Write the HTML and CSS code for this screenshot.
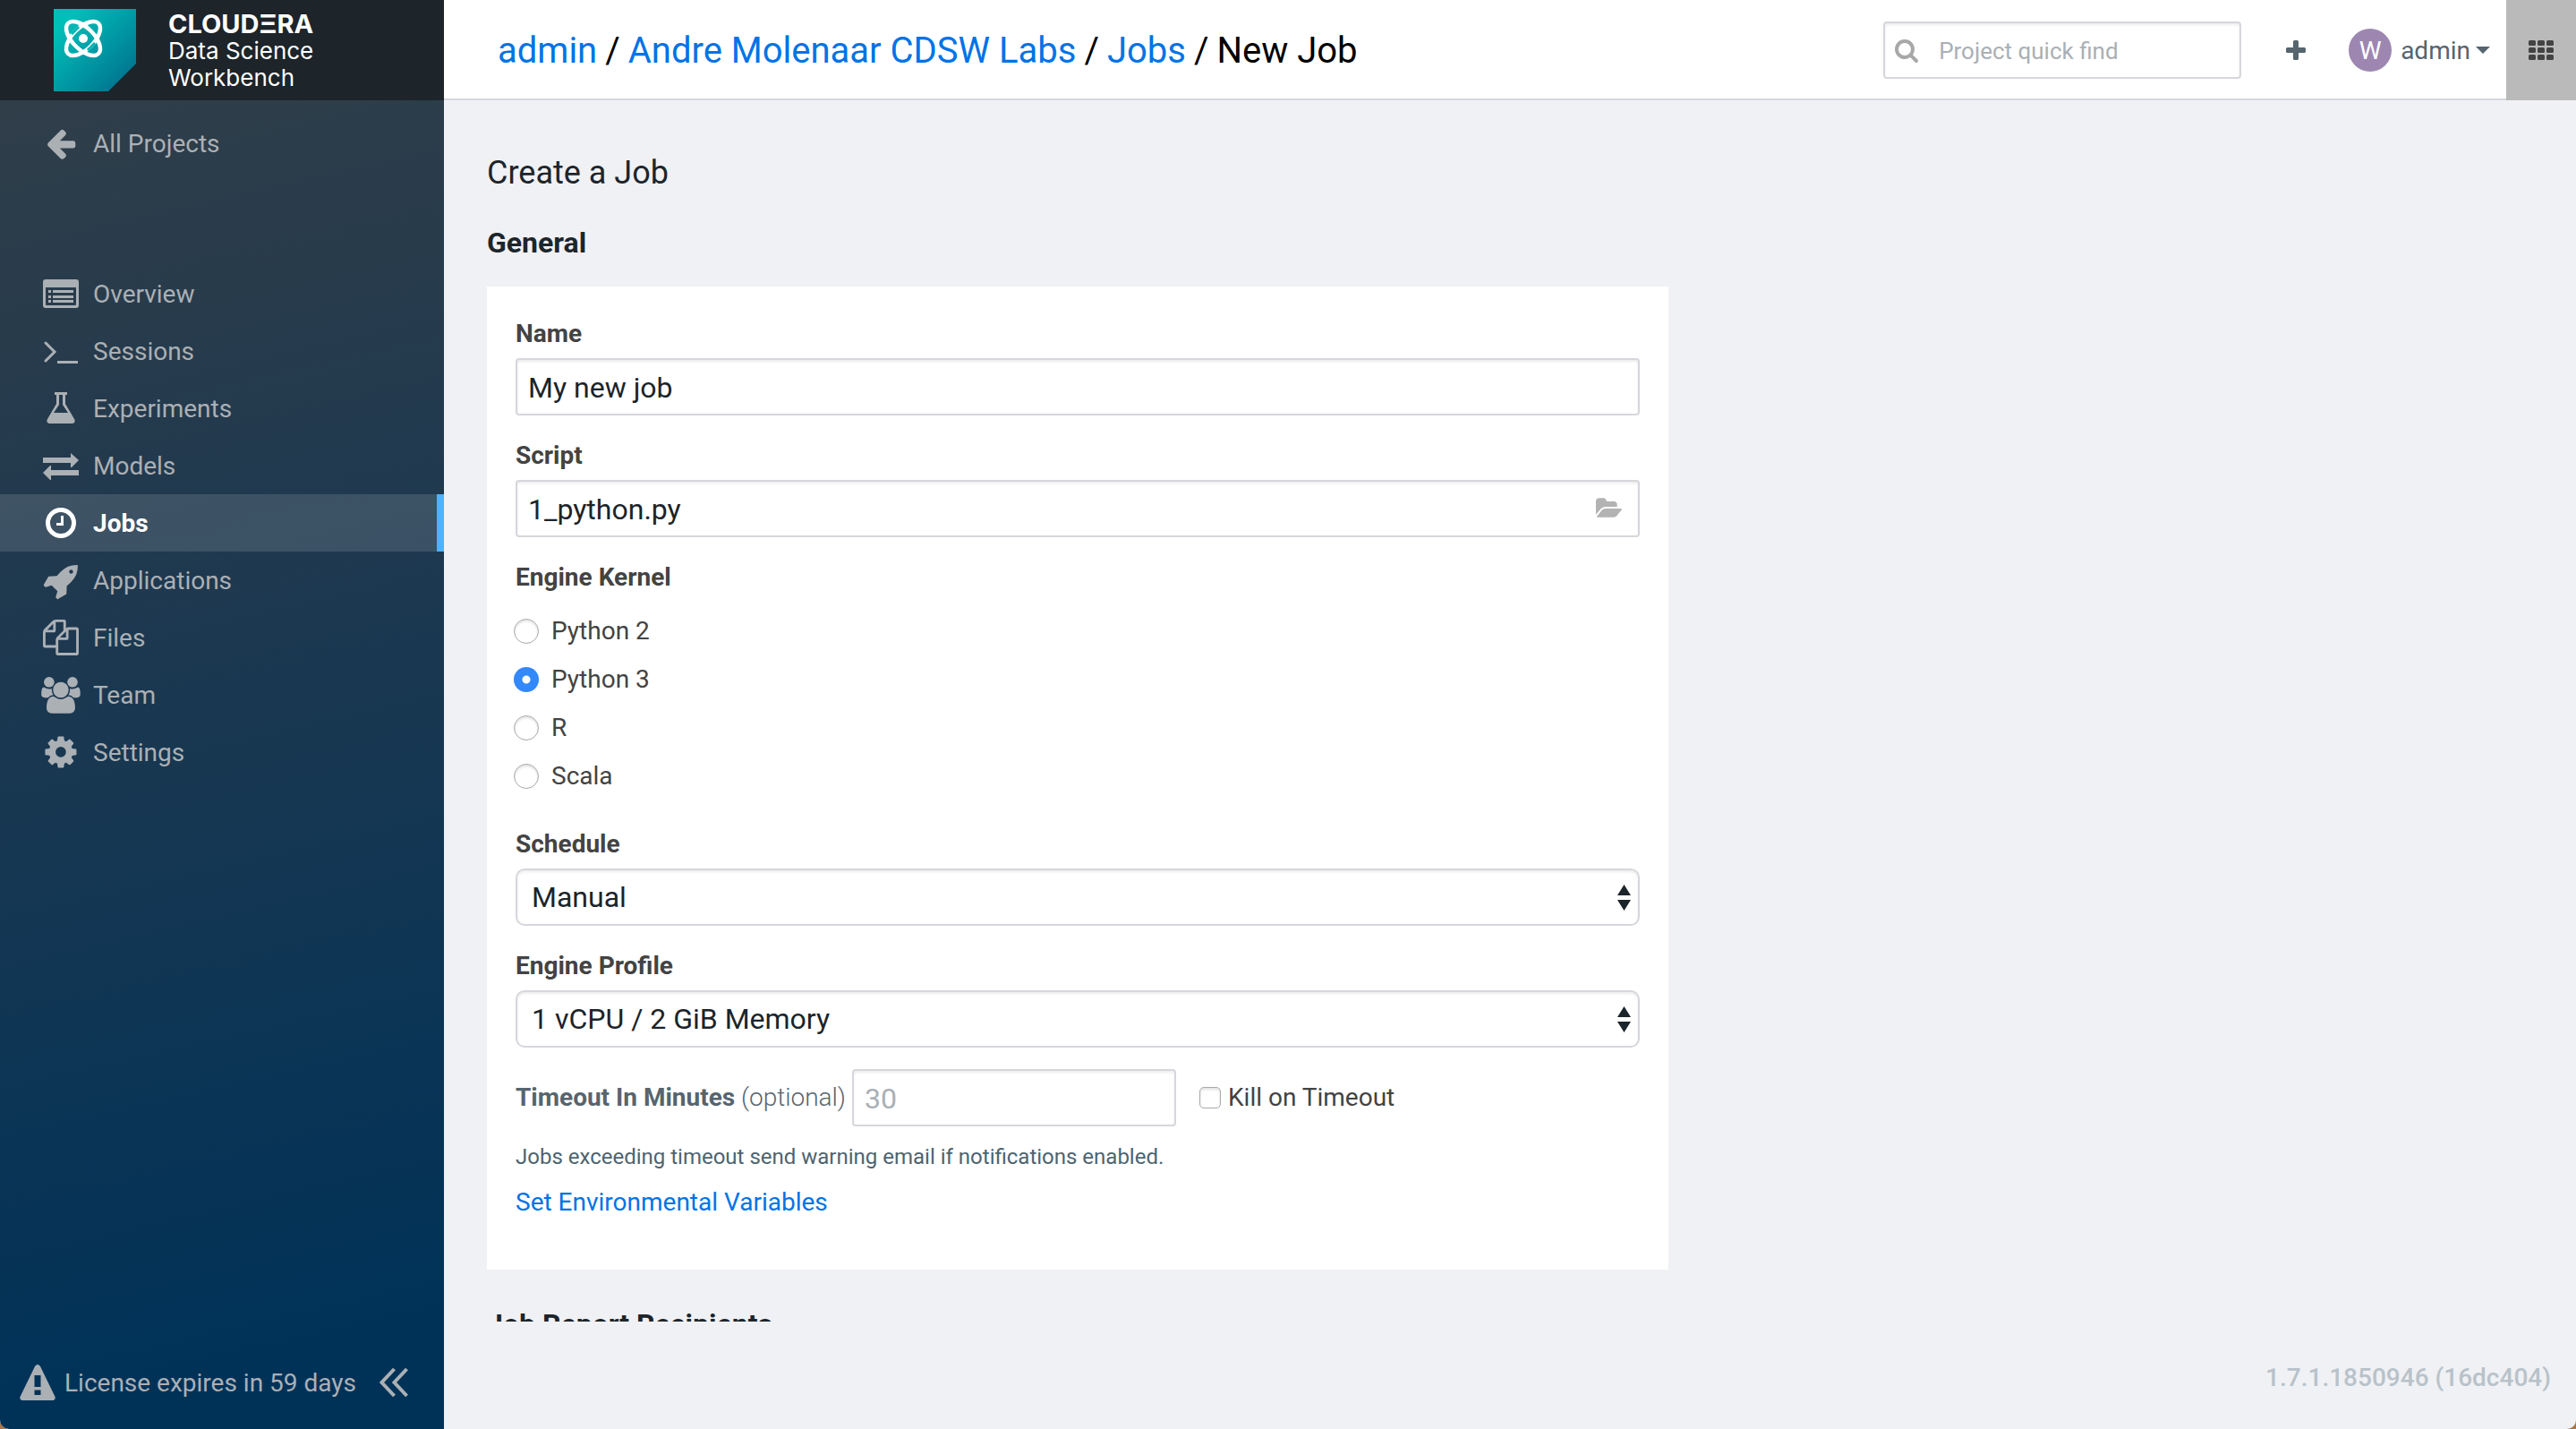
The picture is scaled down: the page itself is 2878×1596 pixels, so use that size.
FILE: index.html
```html
<!DOCTYPE html>
<html lang="en">
<head>
<meta charset="utf-8">
<meta name="viewport" content="width=device-width, initial-scale=1">
<title>New Job - Cloudera Data Science Workbench</title>
<link rel="stylesheet" href="styles.css">
</head>
<body>
<div class="app">
  <aside class="sidebar">
    <a class="brand" href="#">
      <svg class="brand-mark" viewBox="0 0 92 92" aria-hidden="true">
        <defs>
          <linearGradient id="brand-fill" x1="0" y1="0" x2="1" y2="1">
            <stop offset="0.15" stop-color="#00bfb8"/>
            <stop offset="0.85" stop-color="#007892"/>
          </linearGradient>
        </defs>
        <path d="M0 0H92V61L61 92H0z" fill="url(#brand-fill)"/>
        <g fill="none" transform="translate(33 33)">
          <ellipse rx="24" ry="12" transform="rotate(-45)" stroke="#fff" stroke-width="4.500"/>
          <path d="M-13 -5L-5 -13M5 13L13 5" stroke="#04b2b3" stroke-width="3"/>
          <ellipse rx="24" ry="12" transform="rotate(45)" stroke="#fff" stroke-width="4.500"/>
          <circle r="5" fill="#fff"/>
        </g>
      </svg>
      <span class="brand-text"><strong>CLOUDΞRA</strong><span>Data Science</span><span>Workbench</span></span>
    </a>
    <nav class="nav">
      <a class="nav-item nav-back" href="#">
        <svg class="icon" viewBox="-4 -4 44 44" aria-hidden="true"><path transform="translate(-1 -1) scale(.0212)" d="M1664 896v128q0 53-32.500 90.500t-84.500 37.500h-704l293 294q38 36 38 90t-38 90l-75 76q-37 37-90 37-52 0-91-37l-651-652q-37-37-37-90 0-52 37-91l651-650q38-38 91-38 52 0 90 38l75 74q38 38 38 91t-38 91l-293 293h704q52 0 84.500 37.500t32.500 90.500z"/></svg>
        <span>All Projects</span>
      </a>
      <a class="nav-item" href="#">
        <svg class="icon" viewBox="0 0 44 44" aria-hidden="true"><path fill-rule="evenodd" d="M5 6H39a3 3 0 0 1 3 3V35a3 3 0 0 1-3 3H5a3 3 0 0 1-3-3V9a3 3 0 0 1 3-3zM5 15V34q0 1 1 1H38q1 0 1-1V15z"/><path d="M8 18h3v3H8zM13 18H36v3H13zM8 24h3v3H8zM13 24H36v3H13zM8 29h3v3H8zM13 29H36v3H13z"/></svg>
        <span>Overview</span>
      </a>
      <a class="nav-item" href="#">
        <svg class="icon" viewBox="0 0 44 44" aria-hidden="true"><path d="M5 13L15 23 5 33" fill="none" stroke="currentColor" stroke-width="3" stroke-linecap="round"/><path d="M18 33H41v3H18z"/></svg>
        <span>Sessions</span>
      </a>
      <a class="nav-item" href="#">
        <svg class="icon" viewBox="0 0 44 44" aria-hidden="true"><path fill-rule="evenodd" d="M15 4H29v3H27V17L37 34q2 4-2 5H9q-4-1-2-5L17 17V7H15zM20 7V18L14 27H30L24 18V7z"/></svg>
        <span>Experiments</span>
      </a>
      <a class="nav-item" href="#">
        <svg class="icon" viewBox="0 0 44 44" aria-hidden="true"><path d="M2 13H33V8L42 16 34 24H33V19H2zM42 27H11V22H10L2 30 10 38H11V33H42z"/></svg>
        <span>Models</span>
      </a>
      <a class="nav-item active" href="#" aria-current="page">
        <svg class="icon" viewBox="0 0 44 44" aria-hidden="true"><circle cx="22" cy="22" r="14.500" fill="none" stroke="currentColor" stroke-width="5"/><path d="M23.500 14V23.500H17" fill="none" stroke="currentColor" stroke-width="3"/></svg>
        <span>Jobs</span>
      </a>
      <a class="nav-item" href="#">
        <svg class="icon" viewBox="0 0 44 44" aria-hidden="true"><path transform="translate(2 2) scale(.0234)" d="M1440 448q0-40-28-68t-68-28-68 28-28 68 28 68 68 28 68-28 28-68zm224-288q0 249-75.500 430.500t-253.500 360.500q-81 80-195 176l-20 379q-2 16-16 26l-384 224q-7 4-16 4-12 0-23-9l-64-64q-13-14-8-32l85-276-281-281-276 85q-3 1-9 1-14 0-23-9l-64-64q-17-19-5-39l224-384q10-14 26-16l379-20q96-114 176-195 188-187 358-258t431-71q14 0 24 9.500t10 22.500z"/></svg>
        <span>Applications</span>
      </a>
      <a class="nav-item" href="#">
        <svg class="icon" viewBox="0 0 44 44" aria-hidden="true"><path transform="translate(2 2) scale(.0223)" d="M1696 384q40 0 68 28t28 68v1216q0 40-28 68t-68 28h-960q-40 0-68-28t-28-68v-288h-544q-40 0-68-28t-28-68v-672q0-40 20-88t48-76l408-408q28-28 76-48t88-20h416q40 0 68 28t28 68v328q68-40 128-40h416zm-544 213l-299 299h299v-299zm-640-384l-299 299h299v-299zm196 647l316-316v-416h-384v416q0 40-28 68t-68 28h-416v640h512v-256q0-40 20-88t48-76zm956 804v-1152h-384v416q0 40-28 68t-68 28h-416v640h896z"/></svg>
        <span>Files</span>
      </a>
      <a class="nav-item" href="#">
        <svg class="icon" viewBox="0 0 44 44" aria-hidden="true"><path transform="translate(-1.300 2) scale(.0227)" d="M657 896q-162 5-265 128h-134q-82 0-138-40.500t-56-118.500q0-353 124-353 6 0 43.500 21t97.500 42.500 119 21.500q67 0 133-23-5 37-5 66 0 143 83 256zm1071 637q0 120-73 189.500t-194 69.500h-874q-121 0-194-69.500t-73-189.500q0-53 3.500-103.500t14-109 26.500-108.500 43-97.500 62-81 85.500-53.500 111.500-20q10 0 43 21.500t73 48 107 48 135 21.500 135-21.500 107-48 73-48 43-21.500q61 0 111.500 20t85.500 53.500 62 81 43 97.500 26.500 108.500 14 109 3.500 103.500zm-1024-1277q0 106-75 181t-181 75-181-75-75-181 75-181 181-75 181 75 75 181zm704 384q0 159-112.500 271.500t-271.500 112.500-271.500-112.500-112.500-271.500 112.500-271.500 271.500-112.500 271.500 112.500 112.500 271.500zm576 225q0 78-56 118.500t-138 40.500h-134q-103-123-265-128 83-113 83-256 0-29-5-66 66 23 133 23 59 0 119-21.500t97.500-42.500 43.500-21q124 0 124 353zm-128-609q0 106-75 181t-181 75-181-75-75-181 75-181 181-75 181 75 75 181z"/></svg>
        <span>Team</span>
      </a>
      <a class="nav-item" href="#">
        <svg class="icon" viewBox="0 0 44 44" aria-hidden="true"><path transform="translate(1.500 1.500) scale(.0228)" d="M1152 896q0-106-75-181t-181-75-181 75-75 181 75 181 181 75 181-75 75-181zm512-109v222q0 12-8 23t-20 13l-185 28q-19 54-39 91 35 50 107 138 10 12 10 25t-9 23q-27 37-99 108t-94 71q-12 0-26-9l-138-108q-44 23-91 38-16 136-29 186-7 28-36 28h-222q-14 0-24.500-8.500t-11.500-21.500l-28-184q-49-16-90-37l-141 107q-10 9-25 9-14 0-25-11-126-114-165-168-7-10-7-23 0-12 8-23 15-21 51-66.500t54-70.500q-27-50-41-99l-183-27q-13-2-21-12.500t-8-23.500v-222q0-12 8-23t19-13l186-28q14-46 39-92-40-57-107-138-10-12-10-24 0-10 9-23 26-36 98.500-107.500t94.500-71.500q13 0 26 10l138 107q44-23 91-38 16-136 29-186 7-28 36-28h222q14 0 24.500 8.500t11.500 21.500l28 184q49 16 90 37l142-107q9-9 24-9 13 0 25 10 129 119 165 170 7 8 7 22 0 12-8 23-15 21-51 66.500t-54 70.500q26 50 41 98l183 28q13 2 21 12.500t8 23.500z"/></svg>
        <span>Settings</span>
      </a>
    </nav>
    <div class="sidebar-footer">
      <a class="license" href="#">
        <svg class="icon-warning" viewBox="0 0 40 40" aria-hidden="true"><path fill-rule="evenodd" d="M17 2q3-4 6 0L39.500 36q1 3-2 4H2.500q-3-1-2-4zM16.500 12V25H23.500V12zM16.500 28.500V34H23.500V28.500z"/></svg>
        <span>License expires in 59 days</span>
      </a>
      <button class="collapse" type="button" aria-label="Collapse sidebar">
        <svg viewBox="0 0 32 34" aria-hidden="true"><path d="M16.500 2L2.500 17l14 15M30.500 2l-14 15 14 15" fill="none" stroke="currentColor" stroke-width="4"/></svg>
      </button>
    </div>
  </aside>

  <div class="page">
    <header class="topbar">
      <nav class="breadcrumb" aria-label="Breadcrumb">
        <a href="#">admin</a><span>/</span><a href="#">Andre Molenaar CDSW Labs</a><span>/</span><a href="#">Jobs</a><span>/</span><span>New Job</span>
      </nav>
      <div class="search">
        <svg class="search-icon" viewBox="0 0 1792 1792" aria-hidden="true"><path d="M1216 832q0-185-131.500-316.500t-316.500-131.500-316.500 131.500-131.500 316.500 131.500 316.500 316.500 131.500 316.500-131.500 131.500-316.500zm512 832q0 52-38 90t-90 38q-54 0-90-38l-343-342q-179 124-399 124-143 0-273.500-55.500t-225-150-150-225-55.500-273.500 55.500-273.500 150-225 225-150 273.500-55.500 273.500 55.500 225 150 150 225 55.500 273.500q0 220-124 399l343 343q37 37 37 90z"/></svg>
        <input class="control search-input" type="text" aria-label="Project quick find" placeholder="Project quick find">
      </div>
      <button class="add" type="button" aria-label="New">
        <svg viewBox="0 0 22 22" aria-hidden="true"><path d="M9.500 0h3q1.500 0 1.500 1.500V8h6.500Q22 8 22 9.500v3q0 1.500-1.500 1.500H14v6.500q0 1.500-1.500 1.500h-3Q8 22 8 20.500V14H1.500Q0 14 0 12.500v-3Q0 8 1.500 8H8V1.500Q8 0 9.500 0z"/></svg>
      </button>
      <button class="user" type="button">
        <span class="avatar">W</span>
        <span class="user-name">admin</span>
        <svg class="caret" viewBox="0 0 16 8" aria-hidden="true"><path d="M0 0H16L8 8z"/></svg>
      </button>
      <button class="apps" type="button" aria-label="Applications">
        <svg viewBox="0 0 28 22" aria-hidden="true"><g><rect width="8" height="6" rx="1.500"/><rect x="10" width="8" height="6" rx="1.500"/><rect x="20" width="8" height="6" rx="1.500"/><rect y="8" width="8" height="6" rx="1.500"/><rect x="10" y="8" width="8" height="6" rx="1.500"/><rect x="20" y="8" width="8" height="6" rx="1.500"/><rect y="16" width="8" height="6" rx="1.500"/><rect x="10" y="16" width="8" height="6" rx="1.500"/><rect x="20" y="16" width="8" height="6" rx="1.500"/></g></svg>
      </button>
    </header>

    <main class="content">
      <h1>Create a Job</h1>
      <h2>General</h2>
      <form class="card">
        <div class="field">
          <label class="label" for="job-name">Name</label>
          <input class="control" id="job-name" type="text" value="My new job">
        </div>
        <div class="field">
          <label class="label" for="job-script">Script</label>
          <div class="with-icon">
            <input class="control" id="job-script" type="text" value="1_python.py">
            <button class="browse" type="button" aria-label="Browse files">
              <svg viewBox="0 128 1943 1408" aria-hidden="true"><path d="M1943 952q0 31-31 66l-336 396q-43 51-120.500 86.500t-143.500 35.500h-1088q-34 0-60.500-13t-26.500-43q0-31 31-66l336-396q43-51 120.500-86.500t143.500-35.500h1088q34 0 60.500 13t26.500 43zm-343-344v160h-832q-94 0-197 47.500t-164 119.500l-337 396-5 6q0-4-.5-12.500t-.5-12.500v-960q0-92 66-158t158-66h320q92 0 158 66t66 158v32h544q92 0 158 66t66 158z"/></svg>
            </button>
          </div>
        </div>
        <fieldset class="kernels">
          <legend class="label">Engine Kernel</legend>
          <div class="options">
            <label class="option"><input class="radio" type="radio" name="kernel">Python 2</label>
            <label class="option"><input class="radio" type="radio" name="kernel" checked>Python 3</label>
            <label class="option"><input class="radio" type="radio" name="kernel">R</label>
            <label class="option"><input class="radio" type="radio" name="kernel">Scala</label>
          </div>
        </fieldset>
        <div class="field">
          <label class="label" for="schedule">Schedule</label>
          <div class="with-icon">
            <select class="control select" id="schedule"><option>Manual</option></select>
            <svg class="select-arrows" viewBox="0 0 15 29" aria-hidden="true"><path d="M0 12L7.500 0 15 12zM0 17H15L7.500 29z"/></svg>
          </div>
        </div>
        <div class="field">
          <label class="label" for="profile">Engine Profile</label>
          <div class="with-icon">
            <select class="control select" id="profile"><option>1 vCPU / 2 GiB Memory</option></select>
            <svg class="select-arrows" viewBox="0 0 15 29" aria-hidden="true"><path d="M0 12L7.500 0 15 12zM0 17H15L7.500 29z"/></svg>
          </div>
        </div>
        <div class="timeout">
          <label class="timeout-label" for="timeout"><b>Timeout In Minutes</b> (optional)</label>
          <input class="control timeout-input" id="timeout" type="text" placeholder="30">
          <label class="kill"><input class="checkbox" type="checkbox">Kill on Timeout</label>
        </div>
        <p class="help">Jobs exceeding timeout send warning email if notifications enabled.</p>
        <a class="env-link" href="#">Set Environmental Variables</a>
      </form>
      <h2 class="next-section">Job Report Recipients</h2>
    </main>
    <footer class="version">1.7.1.1850946 (16dc404)</footer>
  </div>
</div>
</body>
</html>
```
FILE: styles.css
```css
*, *::before, *::after { box-sizing: border-box; }

html { background: #a8774a; }

body {
  margin: 0;
  font-family: Roboto, "Liberation Sans", sans-serif;
  font-size: 28px;
  line-height: 34px;
  color: #434343;
}

h1, h2, p { margin: 0; }
a { color: #0073e6; text-decoration: none; }
button {
  padding: 0;
  border: 0;
  background: none;
  font: inherit;
  color: inherit;
  cursor: pointer;
}
svg { display: block; flex: none; fill: currentColor; }

.app {
  display: grid;
  grid-template-columns: 496px minmax(0, 1fr);
  height: 100vh;
  overflow: hidden;
  border-radius: 0 0 10px 10px;
  background: #f0f1f4;
}

/* Sidebar */
.sidebar {
  display: flex;
  flex-direction: column;
  background: linear-gradient(167deg, #303e49 6%, #1c3850 45%, #003258 92%);
  color: #abb0b5;
}
.brand {
  display: flex;
  gap: 36px;
  height: 112px;
  padding: 10px 60px;
  background: #1d242a;
  color: #fff;
}
.brand-mark { width: 92px; height: 92px; }
.brand-text {
  display: flex;
  flex-direction: column;
  padding-top: 2px;
  font-family: Inter, sans-serif;
  font-size: 26px;
  line-height: 30px;
}
.brand-text strong { font-size: 29px; }
.nav { flex: 1; padding-top: 16px; }
.nav-item {
  display: flex;
  align-items: center;
  gap: 14px;
  height: 64px;
  padding-left: 46px;
  color: inherit;
}
.nav-item span, .license span, .user-name { padding-top: 2px; }
.nav-back { margin-bottom: 104px; }
.nav-item.active {
  border-right: 8px solid #4ab4ff;
  background: rgba(255, 255, 255, .13);
  color: #fff;
  font-weight: 700;
}
.icon { width: 44px; height: 44px; }
.sidebar-footer {
  display: flex;
  align-items: center;
  gap: 26px;
  height: 104px;
  padding: 0 22px;
}
.license {
  display: flex;
  align-items: center;
  gap: 10px;
  color: inherit;
}
.icon-warning { width: 40px; height: 40px; }
.collapse svg { width: 32px; height: 34px; }

/* Top bar */
.page {
  display: flex;
  flex-direction: column;
  min-width: 0;
  min-height: 0;
}
.topbar {
  display: flex;
  align-items: center;
  height: 112px;
  padding-left: 60px;
  background: linear-gradient(#fff, #fff) top / 100% 110px no-repeat #d6d8de;
  color: #56656e;
}
.breadcrumb {
  display: flex;
  flex: 1;
  gap: 9px;
  padding-top: 2px;
  font-size: 40px;
  line-height: 48px;
  color: #000;
}
.search { position: relative; }
.search-icon {
  position: absolute;
  left: 12px;
  top: 18px;
  width: 28px;
  height: 28px;
  color: #a8a8a8;
}
.control.search-input {
  width: 400px;
  padding-left: 60px;
  font-size: 26px;
}
.add { margin-left: 50px; }
.add svg { width: 22px; height: 22px; }
.user {
  display: flex;
  align-items: center;
  margin: 0 18px 0 48px;
}
.avatar {
  width: 48px;
  height: 48px;
  margin-right: 10px;
  border-radius: 50%;
  background: #9d87b1;
  color: #fff;
  line-height: 50px;
}
.caret { width: 16px; height: 8px; margin-left: 6px; }
.apps {
  display: grid;
  place-items: center;
  width: 78px;
  height: 112px;
  background: #bababa;
  color: #434343;
}
.apps svg { width: 28px; height: 22px; }

/* Form page */
.content {
  flex: 1;
  min-height: 0;
  overflow: hidden;
  padding: 60px 48px 0;
  color: #1d252b;
}
h1 { font-size: 36px; line-height: 42px; font-weight: 400; }
h2 { font-size: 32px; line-height: 42px; margin: 36px 0 28px; }
h2.next-section { margin-top: 40px; }
.card {
  max-width: 1320px;
  padding: 36px 32px 58px;
  background: #fff;
  color: #434343;
}
.field { display: flex; flex-direction: column; gap: 10px; margin-bottom: 28px; }
.label { padding: 0; font-weight: 700; }
.control {
  display: block;
  width: 100%;
  height: 64px;
  padding: 0 12px;
  border: 2px solid #d6d7dc;
  border-radius: 4px;
  background: #fff;
  box-shadow: inset 0 2px 3px rgba(0, 0, 0, .08);
  color: #1b242a;
  font: 32px/40px Roboto, "Liberation Sans", sans-serif;
}
input.control { padding-top: 2px; }
.control::placeholder { color: #a9b0b5; opacity: 1; }
.with-icon { position: relative; }
.select {
  appearance: none;
  padding: 0 16px;
  border-radius: 10px;
}
.select-arrows {
  position: absolute;
  right: 10px;
  top: 18px;
  width: 15px;
  height: 29px;
  color: #1b242a;
  pointer-events: none;
}
.browse {
  position: absolute;
  right: 20px;
  top: 20px;
  color: #b3b3b3;
}
.browse svg { width: 30px; height: 22px; }

.kernels { margin: 0 0 42px; padding: 0; border: 0; }
.options { display: flex; flex-direction: column; gap: 20px; padding-top: 26px; }
.option { display: flex; align-items: center; gap: 14px; }
.radio, .checkbox {
  appearance: none;
  flex: none;
  margin: 0;
  border: 1px solid #a9a9a9;
  background: #fff;
  box-shadow: inset 0 2px 3px rgba(0, 0, 0, .12);
}
.radio { width: 28px; height: 28px; margin-left: -2px; border-radius: 50%; }
.radio:checked {
  border: 0;
  background: radial-gradient(circle, #fff 4px, #3388fa 5px);
  box-shadow: none;
}
.checkbox { width: 24px; height: 24px; border-radius: 5px; }

.timeout { display: flex; align-items: center; margin-top: -4px; }
.timeout-label { color: #56656e; font-weight: 300; }
.timeout-label b { font-weight: 700; }
.control.timeout-input { width: 362px; margin: 0 26px 0 7px; }
.kill { display: flex; align-items: center; gap: 8px; }
.help { margin: 20px 0; font-size: 24px; line-height: 28px; color: #4d6470; }
.env-link { display: block; }

.version {
  height: 120px;
  padding: 46px 28px 0;
  color: #b8c2ca;
  font-weight: 500;
  text-align: right;
}
```
